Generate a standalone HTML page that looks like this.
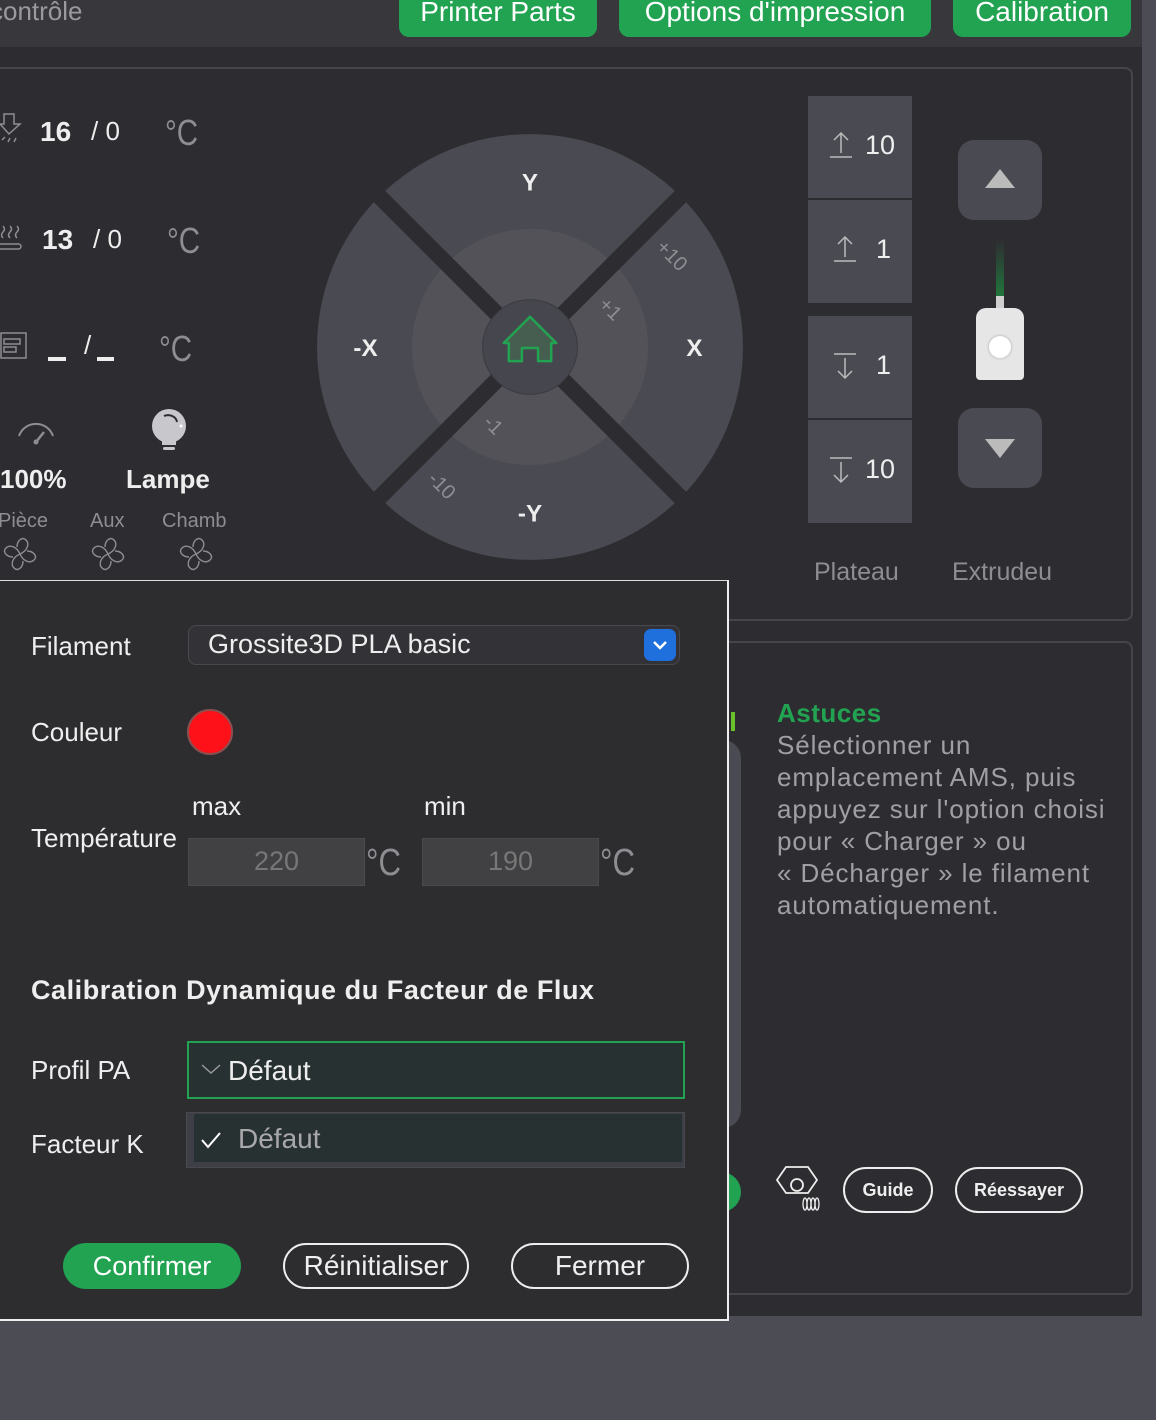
<!DOCTYPE html>
<html><head><meta charset="utf-8"><style>
*{margin:0;padding:0;box-sizing:border-box}
body{width:1156px;height:1420px;background:#4c4c55;font-family:"Liberation Sans",sans-serif;position:relative;overflow:hidden;color:#eee}
.a{position:absolute}
.main{left:0;top:0;width:1142px;height:1316px;background:#2d2d31}
.top{left:0;top:0;width:1142px;height:47px;background:#37373c}
.gbtn{background:#22a352;color:#fff;font-size:28px;border-radius:0 0 10px 10px;text-align:center;top:-6px;height:43px;line-height:36px}
.panel{border:2px solid #45454b;border-radius:8px}
.b{font-weight:bold}
.g{color:#8d8d92}
.zb{background:#4a4a52;left:808px;width:104px;color:#eee;font-size:27px}
.sq{background:#4a4a52;border-radius:16px;left:958px;width:84px;height:80px}
.dlg{left:0;top:580px;width:729px;height:741px;background:#2d2d30;border-top:1.5px solid #ddd;border-right:2px solid #eee;border-bottom:2px solid #eee}
.lab{font-size:26px;color:#eee;left:31px}
.ob{border:2px solid #eee;border-radius:23px;height:46px;line-height:42px;text-align:center;font-size:28px;color:#eee}
.dc{display:inline-block;transform:scaleX(0.82);transform-origin:left}
</style></head><body>
<div class="a main"></div>
<div class="a top"></div>
<div class="a g" style="left:-10px;top:-4px;font-size:26px;color:#9a9a9e">contrôle</div>
<div class="a gbtn" style="left:399px;width:198px">Printer Parts</div>
<div class="a gbtn" style="left:619px;width:312px">Options d'impression</div>
<div class="a gbtn" style="left:953px;width:178px">Calibration</div>

<div class="a panel" style="left:-10px;top:67px;width:1143px;height:554px"></div>
<div class="a panel" style="left:600px;top:641px;width:533px;height:654px"></div>

<svg class="a" style="left:0;top:112px" width="24" height="36" viewBox="0 0 24 36"><path d="M4 2h10v10h6l-11 10-9-10h4z" fill="none" stroke="#8d8d92" stroke-width="1.5"/><path d="M2 28l3-3M8 30l2-4M14 30l2-4" stroke="#8d8d92" stroke-width="1.5"/></svg>
<div class="a b" style="left:40px;top:116px;font-size:28px">16</div>
<div class="a" style="left:91px;top:116px;font-size:26px">/ 0</div>
<div class="a g" style="left:165px;top:112px;font-size:36px"><span class="dc">°C</span></div>
<svg class="a" style="left:0;top:224px" width="24" height="30"><path d="M3 2q3 3 0 6t0 6M10 2q3 3 0 6t0 6M17 2q3 3 0 6t0 6" fill="none" stroke="#8d8d92" stroke-width="1.5"/><rect x="-5" y="20" width="26" height="5" rx="2.5" fill="none" stroke="#8d8d92" stroke-width="1.5"/></svg>
<div class="a b" style="left:42px;top:224px;font-size:28px">13</div>
<div class="a" style="left:93px;top:224px;font-size:26px">/ 0</div>
<div class="a g" style="left:167px;top:220px;font-size:36px"><span class="dc">°C</span></div>
<svg class="a" style="left:0;top:332px" width="28" height="28"><rect x="1" y="1" width="25" height="25" fill="none" stroke="#8d8d92" stroke-width="1.5"/><rect x="4" y="7" width="16" height="5" fill="none" stroke="#8d8d92" stroke-width="1.5"/><rect x="4" y="15" width="12" height="5" fill="none" stroke="#8d8d92" stroke-width="1.5"/></svg>
<div class="a" style="left:48px;top:357px;width:18px;height:4px;background:#eee"></div>
<div class="a" style="left:84px;top:330px;font-size:26px">/</div>
<div class="a" style="left:97px;top:357px;width:17px;height:4px;background:#eee"></div>
<div class="a g" style="left:159px;top:328px;font-size:36px"><span class="dc">°C</span></div>
<svg class="a" style="left:16px;top:412px" width="42" height="36"><path d="M3 24a18 18 0 0 1 34 0" fill="none" stroke="#8d8d92" stroke-width="2"/><path d="M20 30l8-10" stroke="#8d8d92" stroke-width="2.5"/><circle cx="20" cy="30" r="2.5" fill="#8d8d92"/></svg>
<svg class="a" style="left:150px;top:408px" width="40" height="46"><circle cx="19" cy="18" r="17" fill="#c8c8cc"/><rect x="12" y="30" width="14" height="7" fill="#c8c8cc"/><rect x="13" y="39" width="12" height="3" rx="1.5" fill="#c8c8cc"/><path d="M14 8a9 8 0 0 1 13 6" fill="none" stroke="#2d2d31" stroke-width="2"/><circle cx="31" cy="18" r="1.5" fill="#fff"/></svg>
<div class="a b" style="left:0;top:464px;font-size:26px">100%</div>
<div class="a b" style="left:126px;top:464px;font-size:26px">Lampe</div>
<div class="a g" style="left:-2px;top:510px;font-size:20px">Pièce</div>
<div class="a g" style="left:90px;top:510px;font-size:20px">Aux</div>
<div class="a g" style="left:162px;top:510px;font-size:20px">Chamb</div>
<svg width="0" height="0" style="position:absolute"><defs><g id="fan"><path d="M19 19c-3-7-10-10-14-6s1 9 7 9M19 19c7-3 10-10 6-14s-9 1-9 7M19 19c3 7 10 10 14 6s-1-9-7-9M19 19c-7 3-10 10-6 14s9-1 9-7" fill="none" stroke="#8d8d92" stroke-width="1.4"/></g></defs></svg>
<svg class="a" style="left:1px;top:535px" width="38" height="38"><use href="#fan"/></svg>
<svg class="a" style="left:89px;top:535px" width="38" height="38"><use href="#fan"/></svg>
<svg class="a" style="left:177px;top:535px" width="38" height="38"><use href="#fan"/></svg>

<svg class="a" style="left:310px;top:127px" width="440" height="440" viewBox="-218 -218 436 436">
<circle r="211" fill="#4a4a52"/>
<circle r="117" fill="#525258"/>
<path d="M-230 -230L230 230M230 -230L-230 230" stroke="#2d2d31" stroke-width="16"/>
<circle r="47" fill="#46464e" stroke="#3a3a40"/>
<path d="M-26 -4L0 -30L26 -4L21 -4L21 14L8 14L8 1L-8 1L-8 14L-21 14L-21 -4Z" fill="#465e4f" stroke="#22a352" stroke-width="2.5" stroke-linejoin="round"/>
<g font-family="Liberation Sans" font-weight="bold" font-size="24" fill="#eee" text-anchor="middle">
<text x="0" y="-155">Y</text><text x="0" y="173">-Y</text><text x="-163" y="9">-X</text><text x="163" y="9">X</text></g>
<g font-family="Liberation Sans" font-size="20" fill="#8d8d92" text-anchor="middle">
<text transform="translate(136,-86) rotate(45)">+10</text><text transform="translate(75,-33) rotate(45)">+1</text>
<text transform="translate(-41,82) rotate(45)">-1</text><text transform="translate(-92,142) rotate(45)">-10</text></g>
</svg>

<div class="a zb" style="top:96px;height:102px"></div>
<div class="a zb" style="top:200px;height:103px"></div>
<div class="a zb" style="top:316px;height:102px"></div>
<div class="a zb" style="top:420px;height:103px"></div>
<svg class="a" style="left:826px;top:130px" width="30" height="30"><path d="M4 27h22M15 23V3M8 10l7-7 7 7" fill="none" stroke="#bbb" stroke-width="1.5"/></svg>
<div class="a" style="left:865px;top:130px;font-size:27px">10</div>
<svg class="a" style="left:830px;top:234px" width="30" height="30"><path d="M4 27h22M15 23V3M8 10l7-7 7 7" fill="none" stroke="#bbb" stroke-width="1.5"/></svg>
<div class="a" style="left:876px;top:234px;font-size:27px">1</div>
<svg class="a" style="left:830px;top:352px" width="30" height="30"><path d="M4 2h22M15 6v20M8 19l7 7 7-7" fill="none" stroke="#bbb" stroke-width="1.5"/></svg>
<div class="a" style="left:876px;top:350px;font-size:27px">1</div>
<svg class="a" style="left:826px;top:456px" width="30" height="30"><path d="M4 2h22M15 6v20M8 19l7 7 7-7" fill="none" stroke="#bbb" stroke-width="1.5"/></svg>
<div class="a" style="left:865px;top:454px;font-size:27px">10</div>
<div class="a sq" style="top:140px"></div>
<div class="a sq" style="top:408px"></div>
<svg class="a" style="left:984px;top:166px" width="32" height="24"><path d="M1 22L16 3L31 22Z" fill="#bbb"/></svg>
<svg class="a" style="left:984px;top:437px" width="32" height="24"><path d="M1 2L16 21L31 2Z" fill="#bbb"/></svg>
<div class="a" style="left:996px;top:240px;width:8px;height:72px;background:linear-gradient(#2d2d31,#1f8a3f)"></div>
<div class="a" style="left:996px;top:296px;width:8px;height:20px;background:#d0d0d0"></div>
<div class="a" style="left:976px;top:308px;width:48px;height:72px;background:#e6e6e6;border-radius:10px 10px 4px 4px"></div>
<div class="a" style="left:989px;top:336px;width:22px;height:22px;background:#fff;border-radius:50%;box-shadow:0 0 3px #aaa"></div>
<div class="a g" style="left:814px;top:558px;font-size:25px">Plateau</div>
<div class="a" style="left:952px;top:558px;width:100px;overflow:hidden;white-space:nowrap;font-size:25px;color:#8d8d92">Extrudeur</div>

<div class="a" style="left:731px;top:712px;width:4px;height:19px;background:#6ac12a"></div>
<div class="a" style="left:700px;top:740px;width:41px;height:388px;background:#4a4a52;border-radius:0 18px 18px 0"></div>
<div class="a" style="left:700px;top:1172px;width:41px;height:40px;background:#22a352;border-radius:0 20px 20px 0"></div>
<div class="a b" style="left:777px;top:698px;font-size:26px;color:#22a352;letter-spacing:0.5px">Astuces</div>
<div class="a" style="left:777px;top:729px;font-size:26px;line-height:32px;color:#a0a0a4;white-space:nowrap;letter-spacing:0.9px">Sélectionner un<br>emplacement AMS, puis<br>appuyez sur l'option choisi<br>pour « Charger » ou<br>« Décharger » le filament<br>automatiquement.</div>
<svg class="a" style="left:772px;top:1164px" width="52" height="48"><path d="M14 3h22l9 13-9 13h-22l-9-13z" fill="none" stroke="#eee" stroke-width="1.8"/><circle cx="25" cy="21" r="6" fill="none" stroke="#eee" stroke-width="1.8"/><g fill="none" stroke="#eee" stroke-width="1.3"><ellipse cx="33" cy="40" rx="2" ry="6"/><ellipse cx="37" cy="40" rx="2" ry="6"/><ellipse cx="41" cy="40" rx="2" ry="6"/><ellipse cx="45" cy="40" rx="2" ry="6"/></g></svg>
<div class="a ob b" style="left:843px;top:1167px;width:90px;font-size:18px">Guide</div>
<div class="a ob b" style="left:955px;top:1167px;width:128px;font-size:18px">Réessayer</div>

<div class="a dlg"></div>
<div class="a lab" style="top:631px">Filament</div>
<div class="a" style="left:188px;top:625px;width:492px;height:40px;border:1.5px solid #48484e;border-radius:8px;background:#333337"></div>
<div class="a" style="left:208px;top:629px;font-size:27px;color:#eee">Grossite3D PLA basic</div>
<div class="a" style="left:644px;top:629px;width:32px;height:32px;border-radius:7px;background:#1f6fdc"></div>
<svg class="a" style="left:651px;top:638px" width="18" height="14"><path d="M3 4l6 6 6-6" fill="none" stroke="#fff" stroke-width="2.5"/></svg>
<div class="a lab" style="top:717px">Couleur</div>
<div class="a" style="left:187px;top:709px;width:46px;height:46px;border-radius:50%;background:#fe1119;border:2px solid #8a5050"></div>
<div class="a lab" style="left:192px;top:791px">max</div>
<div class="a lab" style="left:424px;top:791px">min</div>
<div class="a lab" style="top:823px">Température</div>
<div class="a" style="left:188px;top:838px;width:177px;height:48px;background:#414144;border:1.5px solid #4a4a4e;text-align:center;line-height:44px;font-size:27px;color:#777">220</div>
<div class="a g" style="left:366px;top:842px;font-size:38px"><span class="dc">°C</span></div>
<div class="a" style="left:422px;top:838px;width:177px;height:48px;background:#414144;border:1.5px solid #4a4a4e;text-align:center;line-height:44px;font-size:27px;color:#777">190</div>
<div class="a g" style="left:600px;top:842px;font-size:38px"><span class="dc">°C</span></div>
<div class="a b" style="left:31px;top:975px;font-size:27px;letter-spacing:0.55px">Calibration Dynamique du Facteur de Flux</div>
<div class="a lab" style="top:1055px">Profil PA</div>
<div class="a" style="left:187px;top:1041px;width:498px;height:58px;border:2px solid #22a352;background:#283132"></div>
<svg class="a" style="left:200px;top:1062px" width="22" height="14"><path d="M2 3l9 8 9-8" fill="none" stroke="#999" stroke-width="1.5"/></svg>
<div class="a" style="left:228px;top:1055px;font-size:28px">Défaut</div>
<div class="a lab" style="top:1129px">Facteur K</div>
<div class="a" style="left:186px;top:1112px;width:499px;height:56px;border:1.5px solid #48484e;background:#3e3e46"></div>
<div class="a" style="left:194px;top:1114px;width:488px;height:48px;background:#283132"></div>
<svg class="a" style="left:200px;top:1130px" width="22" height="20"><path d="M2 10l6 7 12-14" fill="none" stroke="#fff" stroke-width="2"/></svg>
<div class="a" style="left:238px;top:1123px;font-size:28px;color:#a8a8aa">Défaut</div>
<div class="a" style="left:63px;top:1243px;width:178px;height:46px;border-radius:23px;background:#22a352;color:#fff;text-align:center;line-height:46px;font-size:27px">Confirmer</div>
<div class="a ob" style="left:283px;top:1243px;width:186px">Réinitialiser</div>
<div class="a ob" style="left:511px;top:1243px;width:178px">Fermer</div>
</body></html>
